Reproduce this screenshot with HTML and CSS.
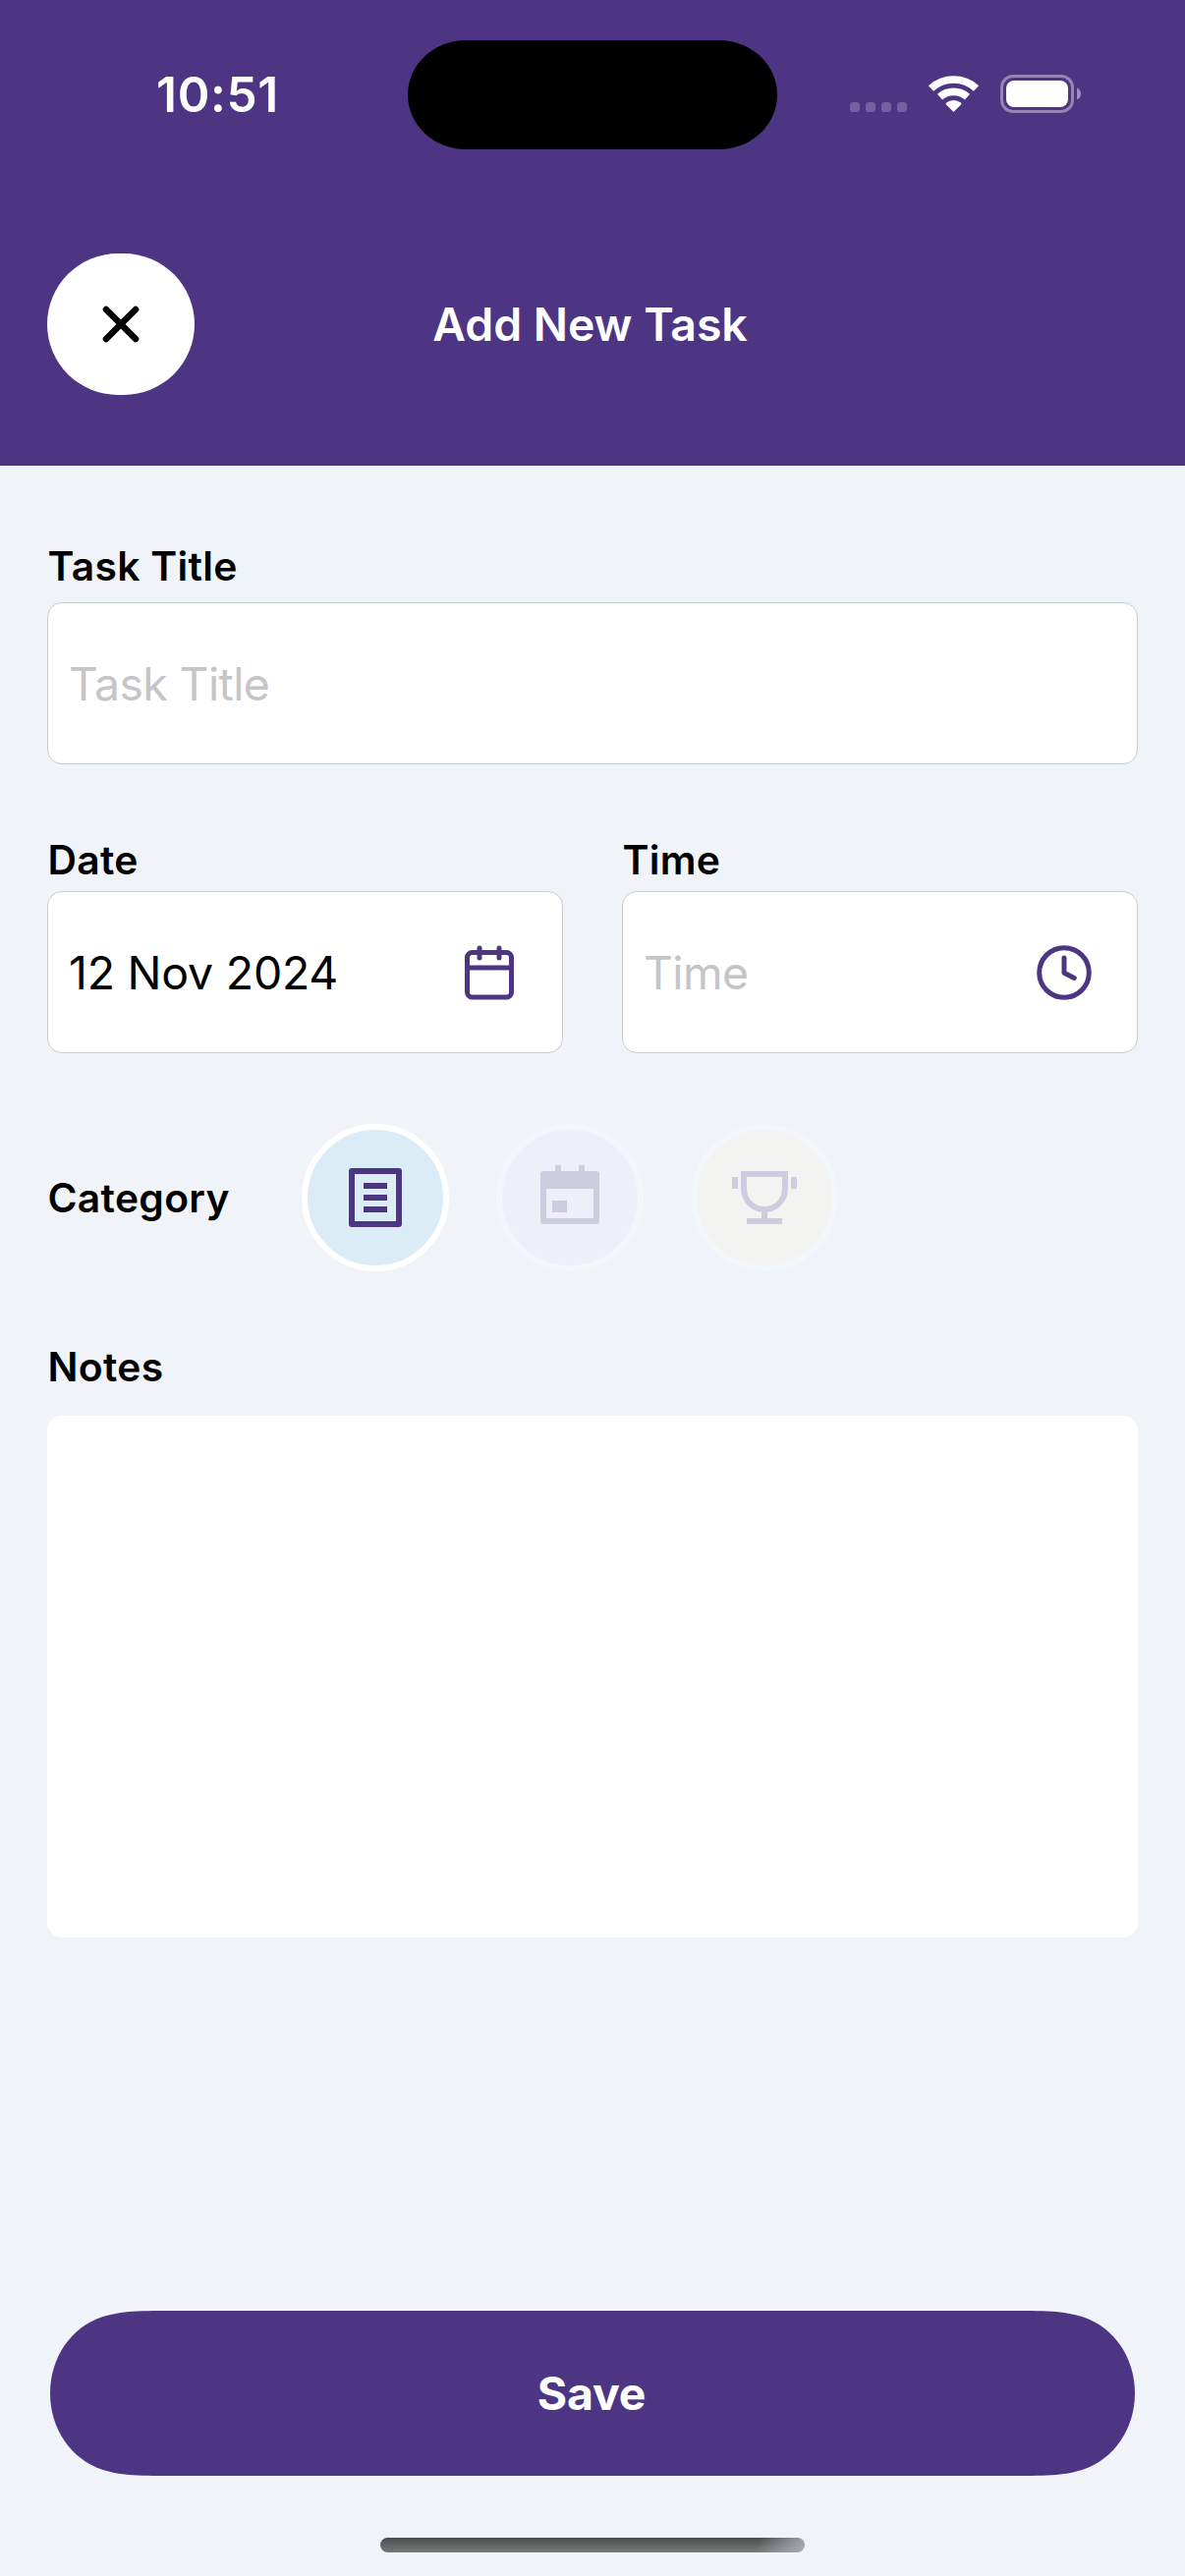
FILE: index.html
```html
<!DOCTYPE html>
<html lang="en">
<head>
<meta charset="utf-8">
<title>Add New Task</title>
<link rel="stylesheet" href="styles.css">
</head>
<body>
<header class="header">
  <div class="status">
    <span class="clock">10:51</span>
    <div class="island"></div>
    <svg class="indicators" width="236" height="40" viewBox="0 0 236 40">
      <g fill="#fff" fill-opacity=".22">
        <rect x="0" y="28" width="10" height="10" rx="3.2"/><rect x="16" y="28" width="10" height="10" rx="3.2"/><rect x="32" y="28" width="10" height="10" rx="3.2"/><rect x="48" y="28" width="10" height="10" rx="3.2"/>
      </g>
      <g fill="none" stroke="#fff" stroke-width="7.6">
        <path d="M82.5 14a34 34 0 0 1 46 0"/>
        <path d="M91.5 22.700a21 21 0 0 1 28 0"/>
      </g>
      <path d="M105.5 38l-7.500-7.600c-.6-.6-.4-1.4.2-1.9a11.800 11.800 0 0 1 14.600 0c.6.5.8 1.300.2 1.900z" fill="#fff"/>
      <rect x="154.500" y="1.500" width="72" height="36" rx="11.500" fill="none" stroke="#fff" stroke-opacity=".4" stroke-width="3"/>
      <rect x="159" y="6" width="63" height="27" rx="8" fill="#fff"/>
      <path d="M231 13.500c2.500 1 4 3.300 4 6s-1.500 5-4 6z" fill="#fff" fill-opacity=".45"/>
    </svg>
  </div>
  <div class="navbar">
    <button class="close" aria-label="Close">
      <svg width="38" height="38" viewBox="0 0 38 38"><path d="M4 4l30 30M34 4L4 34" stroke="#000" stroke-width="6.600" stroke-linecap="round"/></svg>
    </button>
    <h1 class="title">Add New Task</h1>
  </div>
</header>
<main class="form">
  <div class="label">Task Title</div>
  <div class="field field-title"><span class="placeholder">Task Title</span></div>
  <div class="row">
    <div class="column">
      <div class="label">Date</div>
      <div class="field">
        <span class="value">12 Nov 2024</span>
        <svg width="56" height="56" viewBox="0 0 56 56" fill="none" stroke="#4c3682" stroke-width="5" stroke-linecap="round"><rect x="5.500" y="7.500" width="45" height="45.500" rx="5"/><path d="M5.500 23h45" stroke-linecap="butt"/><path d="M18 3v10M38 3v10"/></svg>
      </div>
    </div>
    <div class="column">
      <div class="label">Time</div>
      <div class="field">
        <span class="placeholder">Time</span>
        <svg width="56" height="56" viewBox="0 0 56 56" fill="none" stroke="#4c3682" stroke-width="5" stroke-linecap="round" stroke-linejoin="round"><circle cx="28" cy="28" r="25.300"/><path d="M28 13v15.200l10.300 5.200"/></svg>
      </div>
    </div>
  </div>
  <div class="categories">
    <div class="label category-label">Category</div>
    <button class="category task" aria-label="Task">
      <svg width="72" height="72" viewBox="0 0 24 24" fill="#4c3682"><path fill-rule="evenodd" d="M4 2h16a1 1 0 0 1 1 1v18a1 1 0 0 1-1 1H4a1 1 0 0 1-1-1V3a1 1 0 0 1 1-1zm1 2v16h14V4zm3 3h8v2H8zm0 4h8v2H8zm0 4h8v2H8z"/></svg>
    </button>
    <button class="category event" aria-label="Event">
      <svg width="72" height="72" viewBox="0 0 24 24" fill="#4c3682"><path fill-rule="evenodd" d="M7 1h2v2h6V1h2v2h4a1 1 0 0 1 1 1v16a1 1 0 0 1-1 1H3a1 1 0 0 1-1-1V4a1 1 0 0 1 1-1h4zM4 9v10h16V9zm2 4h5v4H6z"/></svg>
    </button>
    <button class="category goal" aria-label="Goal">
      <svg width="72" height="72" viewBox="0 0 24 24" fill="#4c3682"><path fill-rule="evenodd" d="M4 3h16v6a8 8 0 0 1-7 7.940V19h5v2H6v-2h5v-2.060A8 8 0 0 1 4 9zm2 2v4a6 6 0 0 0 12 0V5zM1 5h2v4H1zm20 0h2v4h-2z"/></svg>
    </button>
  </div>
  <div class="label notes-label">Notes</div>
  <div class="notes"></div>
</main>
<footer class="footer">
  <button class="save">Save</button>
  <div class="home"></div>
</footer>
</body>
</html>
```
FILE: styles.css
```css
* { box-sizing: border-box; }

body {
  margin: 0;
  width: 1206px;
  height: 2622px;
  display: flex;
  flex-direction: column;
  background: #f0f4f9;
  color: #000;
  font-family: Inter, "Liberation Sans", sans-serif;
}

button {
  border: 0;
  padding: 0;
  font: inherit;
}

svg { display: block; }

.header {
  height: 474px;
  background: #4d3584;
  color: #fff;
}

.status {
  height: 153px;
  padding-top: 41px;
  display: grid;
  grid-template-columns: 415px 376px 1fr;
}

.clock {
  padding: 30px 0 0 159px;
  font-size: 49.5px;
  font-weight: 600;
  letter-spacing: .7px;
  line-height: 50px;
}

.island {
  height: 111px;
  border-radius: 59px / 55.5px;
  background: #000;
}

.indicators { margin: 35px 0 0 74px; }

.navbar {
  padding: 105px 48px 0;
  display: grid;
  grid-template-columns: 150px 1fr 150px;
  align-items: center;
}

.close {
  width: 150px;
  height: 144px;
  border-radius: 72px;
  display: flex;
  align-items: center;
  justify-content: center;
  background: #fff;
}

.title {
  margin: 0;
  padding-right: 5px;
  text-align: center;
  font-size: 46.4px;
  font-weight: 600;
  letter-spacing: -.05px;
  line-height: 56px;
}

.form {
  flex: 1;
  padding: 77px 48px 0;
}

.label {
  padding-left: .5px;
  font-size: 40.8px;
  font-weight: 600;
  letter-spacing: .3px;
  line-height: 50px;
}

.field {
  height: 165px;
  margin-top: 7px;
  padding: 0 46px 0 21px;
  display: flex;
  align-items: center;
  justify-content: space-between;
  border: 1px solid #cbcbcd;
  border-radius: 15px;
  background: #fff;
  font-size: 46.4px;
  line-height: 56px;
}

.field-title { margin-top: 12px; }

.placeholder {
  color: #c5c5c7;
  letter-spacing: -.6px;
}

.value { letter-spacing: -.2px; }

.row {
  margin-top: 72px;
  display: grid;
  grid-template-columns: 525px 525px;
  gap: 60px;
}

.categories {
  margin-top: 72px;
  display: flex;
  align-items: center;
  gap: 48px;
}

.category-label { width: 211px; }

.category {
  width: 150px;
  height: 150px;
  border: 6px solid #fff;
  border-radius: 50%;
  display: flex;
  align-items: center;
  justify-content: center;
}

.task { background: #dbecf6; }
.event, .goal { opacity: .2; }
.event { background: #e5e1fa; }
.goal { background: #fff8d2; }

.notes-label { margin-top: 72px; }

.notes {
  height: 531px;
  margin-top: 25px;
  border-radius: 15px;
  background: #fff;
}

.footer {
  height: 270px;
  padding: 0 51px;
}

.save {
  display: block;
  width: 1104px;
  height: 168px;
  padding-right: 2px;
  background: #4d3584;
  color: #fff;
  font-size: 46.4px;
  font-weight: 700;
  letter-spacing: -.2px;
  clip-path: path("M0 84C0 48 21 17 53 6.300C73 0 91 0 130 0H974C1013 0 1031 0 1051 6.300C1083 17 1104 48 1104 84C1104 120 1083 151 1051 161.700C1031 168 1013 168 974 168H130C91 168 73 168 53 161.700C21 151 0 120 0 84Z");
}

.home {
  width: 432px;
  height: 15px;
  margin: 63px auto 0;
  border-radius: 7.5px;
  background:
    linear-gradient(110deg, rgba(175, 180, 184, 0) 88%, rgba(175, 180, 184, .9) 100%),
    linear-gradient(#4a4c4e, #787878);
}
```
